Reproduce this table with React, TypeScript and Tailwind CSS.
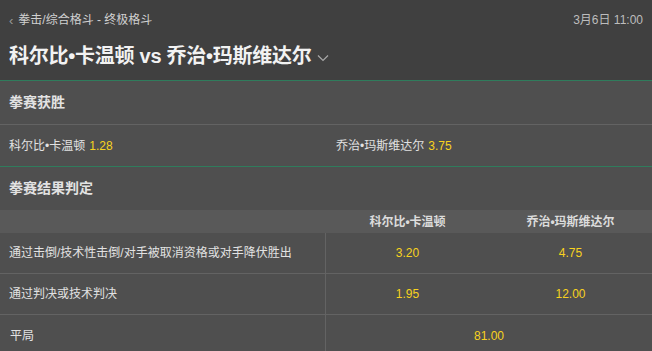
import React from "react";

const FONT = {
  fontFamily: '"Liberation Sans", "Noto Sans CJK SC", sans-serif',
};

const fighters = ["科尔比•卡温顿", "乔治•玛斯维达尔"];

const methodRows = [
  { label: "通过击倒/技术性击倒/对手被取消资格或对手降伏胜出", odds: ["3.20", "4.75"] },
  { label: "通过判决或技术判决", odds: ["1.95", "12.00"] },
];

const Odd = ({ children }: { children: React.ReactNode }) => (
  <span className="text-[#f7d21e]">{children}</span>
);

export default function App() {
  return (
    <div className="w-[652px] h-[351px] overflow-hidden bg-[#4f4f4f] text-[#e2e2e2]" style={FONT}>
      {/* header */}
      <div className="h-[81px] bg-[#404040] border-b border-[#2f7c5c] px-[9px] pt-[12px]">
        <div className="flex items-center justify-between h-[16px] text-[12px]">
          <div className="flex items-center gap-[5px] text-[#d0d0d0]">
            <span className="text-[#9a9a9a] text-[13px] leading-none">‹</span>
            <span>拳击/综合格斗 - 终极格斗</span>
          </div>
          <span className="text-[#bdbdbd]">3月6日 11:00</span>
        </div>
        <div className="flex items-center mt-[15px] h-[26px]">
          <h1 className="text-[20px] font-bold text-[#f2f2f2] leading-none tracking-[-0.25px]">
            科尔比•卡温顿 vs 乔治•玛斯维达尔
          </h1>
          <svg width="12" height="8" viewBox="0 0 12 8" className="ml-[5px] mt-[4px]">
            <path d="M1 1.5 L6 6.5 L11 1.5" stroke="#a8a8a8" strokeWidth="1.2" fill="none" />
          </svg>
        </div>
      </div>

      {/* match winner */}
      <div className="h-[44px] flex items-center px-[9px] border-b border-[#636363]">
        <span className="text-[14px] font-bold">拳赛获胜</span>
      </div>
      <div className="h-[42px] flex items-center border-b border-[#2f7c5c] text-[12px]">
        <div className="w-[326px] px-[9px] flex gap-[4px]">
          <span>{fighters[0]}</span>
          <Odd>1.28</Odd>
        </div>
        <div className="flex-1 px-[10px] flex gap-[4px]">
          <span>{fighters[1]}</span>
          <Odd>3.75</Odd>
        </div>
      </div>

      {/* method of victory */}
      <div className="h-[43px] flex items-center px-[9px]">
        <span className="text-[14px] font-bold">拳赛结果判定</span>
      </div>
      <div className="h-[23px] flex items-center bg-[#595959] text-[12px] font-bold text-[#dcdcdc]">
        <div className="w-[326px]" />
        <div className="flex-1 text-center">{fighters[0]}</div>
        <div className="flex-1 text-center">{fighters[1]}</div>
      </div>
      {methodRows.map((row) => (
        <div key={row.label} className="h-[41px] flex border-b border-[#636363] text-[12px]">
          <div className="w-[326px] flex items-center px-[9px] border-r border-[#636363]">{row.label}</div>
          <div className="flex-1 flex items-center justify-center">
            <Odd>{row.odds[0]}</Odd>
          </div>
          <div className="flex-1 flex items-center justify-center">
            <Odd>{row.odds[1]}</Odd>
          </div>
        </div>
      ))}
      <div className="h-[41px] flex text-[12px]">
        <div className="w-[326px] flex items-center px-[10px] border-r border-[#636363]">平局</div>
        <div className="flex-1 flex items-center justify-center">
          <Odd>81.00</Odd>
        </div>
      </div>
    </div>
  );
}
